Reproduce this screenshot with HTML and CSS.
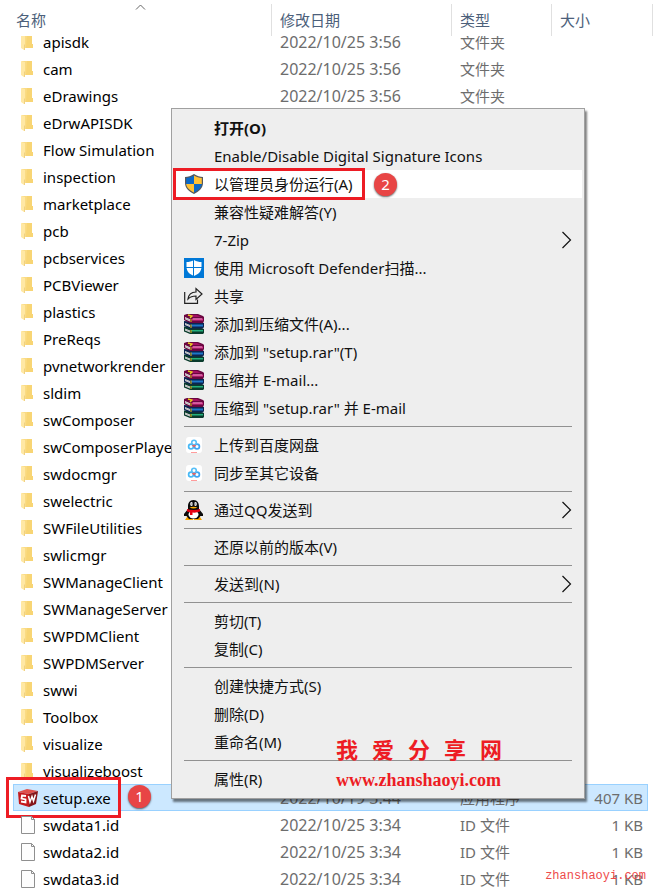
FILE: index.html
```html
<!DOCTYPE html>
<html lang="zh-CN">
<head>
    <meta charset="UTF-8">
    <title>setup.exe</title>

    <link rel="stylesheet" href="styles.css">

</head>
<body>
    <!-- Ícones -->
    <svg class="sprite" aria-hidden="true">
        <symbol id="folder" viewBox="0 0 14 18">
            <path d="M1 1H11V11H12V15H1Z" fill="#fadb84"/>
            <path d="M6 1H11V11H12V15H5Z" fill="#f8d574"/>
            <path d="M0 1L4 2V17H3L0 15Z" fill="#ffe8a4"/>
            <path d="M4 2V17H3V12L4 11Z" fill="#efd183"/>
        </symbol>
        <symbol id="file" viewBox="0 0 14 18">
            <path d="M.5 .5H10.500L13.500 3.500V17.500H.5Z" fill="#fdfdfd" stroke="#8f8f8f"/>
            <path d="M10.500 .5V3.500H13.500" fill="none" stroke="#8f8f8f"/>
        </symbol>
        <symbol id="solidworks" viewBox="0 0 20 18">
            <path d="M0 3L9 0L20 2L11 5Z" fill="#e0504c"/>
            <path d="M0 3L11 5V18L1 15Z" fill="#c4191d"/>
            <path d="M11 5L20 2L18 15L11 18Z" fill="#85161a"/>
            <path d="M8 7L4 6.500L3.500 9.500L7.500 10.500V13.500L3 12.500" fill="none" stroke="#fff" stroke-width="1.800"/>
            <path d="M10.500 7L12 13L14 7.500L15.500 12L17.500 5.500" fill="none" stroke="#fff" stroke-width="1.500"/>
        </symbol>
        <symbol id="uac" viewBox="0 0 20 20">
            <path d="M10 0C7 2 4 3 1 3V9C1 14 5 17.500 10 20C15 17.500 19 14 19 9V3C16 3 13 2 10 0Z" fill="#55585c"/>
            <path d="M10 1.500C7.500 3 5 4 2.200 4V10H10Z" fill="#0b69c7"/>
            <path d="M10 1.500C12.500 3 15 4 17.800 4V10H10Z" fill="#ffc235"/>
            <path d="M10 18.500C5.500 16.300 2.500 13.500 2.200 10H10Z" fill="#ffc235"/>
            <path d="M10 18.500C14.500 16.300 17.500 13.500 17.800 10H10Z" fill="#0b69c7"/>
        </symbol>
        <symbol id="defender" viewBox="0 0 20 20">
            <path d="M0 0H20V20H0Z" fill="#0078d7"/>
            <path d="M10 2C7.500 3.500 5 4 2.500 4V9C2.500 13.500 6 16.500 10 18C14 16.500 17.500 13.500 17.500 9V4C15 4 12.500 3.500 10 2Z" fill="#fff"/>
            <path d="M9.500 2V18M2 9.500H18" stroke="#0078d7" fill="none"/>
        </symbol>
        <symbol id="share" viewBox="0 0 20 20">
            <path d="M.7 6V17.300H13.500V13.500" fill="none" stroke="#222" stroke-width="1.200"/>
            <path d="M4 13C4.500 8.500 7.500 6.200 12 6V2.500L18 8L12 13.500V10C8 10 6 11 4 13Z" fill="none" stroke="#222" stroke-width="1.200"/>
        </symbol>
        <symbol id="winrar" viewBox="0 0 20 20">
            <path d="M0 12.500L15 13L20 15V19L19 20H6L0 17.500Z" fill="#0a3b2c"/>
            <path d="M7 16H19V17.500H7Z" fill="#22b07c"/>
            <path d="M0 7L15 8L20 9V13L19 14.500H6L0 12Z" fill="#0c2450"/>
            <path d="M7 10.500H19V12.500H7Z" fill="#1d77c8"/>
            <path d="M0 1L3 0H14L19 2L20 3V7L19 9H6L0 6Z" fill="#6b0640"/>
            <path d="M3 1H13L17 3H8Z" fill="#a30d62"/>
            <path d="M8 4.500H19V6.500H8Z" fill="#d3358c"/>
            <path d="M9 4.500H18V5.300H9Z" fill="#f0a0cc"/>
            <path d="M1 3L6 5.300V7.500L1 5.300ZM1 9L6 11V13L1 11ZM1 14.500L6 16.500V18.500L1 16.500Z" fill="#e4e4e4"/>
            <path d="M1 4.200L6 6.400M1 10L6 12M1 15.500L6 17.500" fill="none" stroke="#999" stroke-width=".6"/>
            <path d="M4 1L8 2L6 4" fill="none" stroke="#e8cf1c" stroke-width="1.300"/>
            <path d="M7 5V8M7 10.500V14M7 16V19" stroke="#c4a51c" stroke-width="1.200"/>
        </symbol>
        <symbol id="baidu" viewBox="0 0 20 20">
            <rect x="2" y="2" width="16" height="16" rx="3" fill="#fff"/>
            <circle cx="7" cy="11.500" r="2.400" fill="none" stroke="#46b8f5" stroke-width="1.700"/>
            <circle cx="13" cy="11.500" r="2.400" fill="none" stroke="#3fa4f2" stroke-width="1.700"/>
            <circle cx="10" cy="7.500" r="2.300" fill="none" stroke="#58bff7" stroke-width="1.600"/>
            <path d="M8.500 10L10 11.500L11.500 10" fill="none" stroke="#f0605f" stroke-width="1.500"/>
            <path d="M7 17.500H13" stroke="#ff9c9c"/>
        </symbol>
        <symbol id="qq" viewBox="0 0 20 20">
            <path d="M3 17H9V20H1ZM10 17H16L18 20H10Z" fill="#f5a400"/>
            <path d="M9.500 0C5.500 0 4 3 4 6.500V9L0 14V16H2.500L5 19H14L16.500 16H19V14L15 9V6.500C15 3 13.500 0 9.500 0Z" fill="#0b0b0b"/>
            <ellipse cx="9.500" cy="14.500" rx="5" ry="4" fill="#fff"/>
            <ellipse cx="7.500" cy="4" rx="1.300" ry="2" fill="#fff"/>
            <ellipse cx="11.500" cy="4" rx="1.300" ry="2" fill="#fff"/>
            <path d="M7.500 4H8.500M10.500 4H11.500" stroke="#000"/>
            <path d="M5.500 7.500Q9.500 6 13.500 7.500Q9.500 9.500 5.500 7.500Z" fill="#ffae00"/>
            <path d="M3 9Q9.500 11 16 9V11.500Q12 13 8.500 12.500V15H6V12.300L3 11.500Z" fill="#e60012"/>
        </symbol>
        <symbol id="arrow" viewBox="0 0 10 18">
            <path d="M.5 1L8.500 9L.5 17" fill="none" stroke="#111" stroke-width="1.200"/>
        </symbol>
    </svg>

    <main class="explorer">
        <table class="files">
            <thead>
                <tr>
                    <th class="col-name"><span>名称<svg class="sort" viewBox="0 0 10 6"><path d="M.5 5.500L5 1L9.500 5.500" fill="none" stroke="#666"/></svg></span></th>
                    <th class="col-date"><span>修改日期</span></th>
                    <th class="col-type"><span>类型</span></th>
                    <th class="col-size"><span>大小</span></th>
                </tr>
            </thead>
            <tbody id="fileList"></tbody>
        </table>
        <div class="site-mark">zhanshaoyi.com</div>
    </main>

    <ul class="menu">
        <li><button type="button" class="default">打开(O)</button></li>
        <li><button type="button">Enable/Disable Digital Signature Icons</button></li>
        <li class="active">
            <button type="button"><svg class="icon"><use href="#uac"/></svg>以管理员身份运行(A)</button>
            <span class="mark mark-menu"></span>
            <span class="badge badge-menu">2</span>
        </li>
        <li><button type="button">兼容性疑难解答(Y)</button></li>
        <li><button type="button">7-Zip<svg class="arrow"><use href="#arrow"/></svg></button></li>
        <li><button type="button"><svg class="icon"><use href="#defender"/></svg>使用 Microsoft Defender扫描...</button></li>
        <li><button type="button"><svg class="icon"><use href="#share"/></svg>共享</button></li>
        <li><button type="button"><svg class="icon"><use href="#winrar"/></svg>添加到压缩文件(A)...</button></li>
        <li><button type="button"><svg class="icon"><use href="#winrar"/></svg>添加到 "setup.rar"(T)</button></li>
        <li><button type="button"><svg class="icon"><use href="#winrar"/></svg>压缩并 E-mail...</button></li>
        <li><button type="button"><svg class="icon"><use href="#winrar"/></svg>压缩到 "setup.rar" 并 E-mail</button></li>
        <li class="separator"></li>
        <li><button type="button"><svg class="icon"><use href="#baidu"/></svg>上传到百度网盘</button></li>
        <li><button type="button"><svg class="icon"><use href="#baidu"/></svg>同步至其它设备</button></li>
        <li class="separator"></li>
        <li><button type="button"><svg class="icon"><use href="#qq"/></svg>通过QQ发送到<svg class="arrow"><use href="#arrow"/></svg></button></li>
        <li class="separator"></li>
        <li><button type="button">还原以前的版本(V)</button></li>
        <li class="separator"></li>
        <li><button type="button">发送到(N)<svg class="arrow"><use href="#arrow"/></svg></button></li>
        <li class="separator"></li>
        <li><button type="button">剪切(T)</button></li>
        <li><button type="button">复制(C)</button></li>
        <li class="separator"></li>
        <li><button type="button">创建快捷方式(S)</button></li>
        <li><button type="button">删除(D)</button></li>
        <li><button type="button">重命名(M)</button></li>
        <li class="separator"></li>
        <li><button type="button">属性(R)</button></li>
        <li class="watermark">
            <div class="watermark-name"><span>我</span><span>爱</span><span>分</span><span>享</span><span>网</span></div>
            <div class="watermark-url">www.zhanshaoyi.com</div>
        </li>
    </ul>

    <script>
        const arquivos = [
            { nome: "apisdk", data: "2022/10/25 3:56", tipo: "文件夹" },
            { nome: "cam", data: "2022/10/25 3:56", tipo: "文件夹" },
            { nome: "eDrawings", data: "2022/10/25 3:56", tipo: "文件夹" },
            { nome: "eDrwAPISDK" },
            { nome: "Flow Simulation" },
            { nome: "inspection" },
            { nome: "marketplace" },
            { nome: "pcb" },
            { nome: "pcbservices" },
            { nome: "PCBViewer" },
            { nome: "plastics" },
            { nome: "PreReqs" },
            { nome: "pvnetworkrender" },
            { nome: "sldim" },
            { nome: "swComposer" },
            { nome: "swComposerPlayer" },
            { nome: "swdocmgr" },
            { nome: "swelectric" },
            { nome: "SWFileUtilities" },
            { nome: "swlicmgr" },
            { nome: "SWManageClient" },
            { nome: "SWManageServer" },
            { nome: "SWPDMClient" },
            { nome: "SWPDMServer" },
            { nome: "swwi" },
            { nome: "Toolbox" },
            { nome: "visualize" },
            { nome: "visualizeboost" },
            { nome: "setup.exe", icone: "solidworks", data: "2022/10/19 3:44", tipo: "应用程序", tamanho: "407 KB", selecionado: true },
            { nome: "swdata1.id", icone: "file", data: "2022/10/25 3:34", tipo: "ID 文件", tamanho: "1 KB" },
            { nome: "swdata2.id", icone: "file", data: "2022/10/25 3:34", tipo: "ID 文件", tamanho: "1 KB" },
            { nome: "swdata3.id", icone: "file", data: "2022/10/25 3:34", tipo: "ID 文件", tamanho: "1 KB" }
        ];

        const lista = document.getElementById("fileList");

        arquivos.forEach(arquivo => {
            let linha = lista.insertRow();
            let icone = arquivo.icone || "folder";
            let marcas = "";
            if (arquivo.selecionado) {
                linha.className = "selected";
                marcas = '<span class="mark mark-file"></span><span class="badge badge-file">1</span>';
            }
            linha.innerHTML = `
                <td><div class="name"><svg class="${icone}"><use href="#${icone}"/></svg>${arquivo.nome}${marcas}</div></td>
                <td class="date">${arquivo.data || ""}</td>
                <td>${arquivo.tipo || ""}</td>
                <td class="size">${arquivo.tamanho || ""}</td>
            `;
        });
    </script>
</body>
</html>
```
FILE: styles.css
```css
body {
    margin: 0;
    position: relative;
    background: #fff;
    font-family: "Noto Sans", "Noto Sans CJK SC", sans-serif;
    font-size: 15px;
    color: #000;
}
.sprite {
    display: none;
}
.explorer {
    position: relative;
    padding: 0 18px 0 13px;
}

/* Lista de arquivos */
.files {
    width: 100%;
    table-layout: fixed;
    border-spacing: 0;
    line-height: 20px;
    white-space: nowrap;
}
.files th {
    height: 28px;
    padding: 0;
    text-align: left;
    font-weight: normal;
    color: #4c607a;
}
.files th span {
    display: block;
    box-sizing: border-box;
    position: relative;
    z-index: 1;
    height: 36px;
    margin-bottom: -8px;
    padding: 10px 0 0 8px;
    background: #fff;
}
.files .col-name span {
    padding-left: 3px;
}
.files th span::after {
    content: "";
    position: absolute;
    top: 4px;
    right: 0;
    width: 1px;
    height: 32px;
    background: #e0e0e0;
}
.files .col-size span {
    margin-right: -5px;
}
.col-date {
    width: 180px;
}
.col-type {
    width: 100px;
}
.col-size {
    width: 96px;
}
.sort {
    position: absolute;
    top: 4px;
    left: 122px;
    width: 11px;
    height: 6px;
}
.files td {
    height: 27px;
    padding: 0 0 0 8px;
    color: #6d6d6d;
}
.files td.date {
    font-size: 16px;
}
.files td.size {
    padding: 0 5px 0 0;
    text-align: right;
}
.name {
    display: flex;
    align-items: center;
    position: relative;
    color: #000;
}
.name svg {
    width: 14px;
    height: 18px;
    margin-right: 8px;
}
.name .solidworks {
    width: 20px;
    margin: 0 5px 0 -3px;
}
.selected {
    background: #cce8ff;
    outline: 1px solid #99d1ff;
    outline-offset: -1px;
}

/* Menu de contexto */
.menu {
    box-sizing: border-box;
    position: absolute;
    z-index: 2;
    top: 108px;
    left: 171px;
    width: 414px;
    margin: 0;
    padding: 5px 2px;
    list-style: none;
    background: #eee;
    border: 1px solid #a0a0a0;
    box-shadow: 2px 3px 2px rgba(0, 0, 0, 0.5);
}
.menu button {
    display: flex;
    align-items: center;
    position: relative;
    width: 100%;
    height: 28px;
    padding: 0 10px 0 40px;
    background: none;
    border: none;
    font: inherit;
    line-height: 20px;
    color: #111;
}
.menu .default {
    font-weight: bold;
}
.menu .active {
    position: relative;
    background: #fff;
}
.menu .separator {
    height: 1px;
    margin: 4px 10px;
    background: #919191;
}
.icon {
    width: 20px;
    height: 20px;
    margin: 0 10px 0 -30px;
}
.arrow {
    width: 10px;
    height: 18px;
    margin-left: auto;
}

/* Marcas vermelhas */
.mark {
    box-sizing: border-box;
    position: absolute;
    border: 3px solid #ed1c24;
}
.mark-menu {
    top: -2px;
    left: -1px;
    width: 192px;
    height: 32px;
}
.mark-file {
    top: -11px;
    left: -15px;
    width: 115px;
    height: 41px;
}
.badge {
    position: absolute;
    width: 23px;
    height: 23px;
    background: #e84545;
    border-radius: 50%;
    box-shadow: 0 1px 2px rgba(0, 0, 0, 0.6);
    line-height: 23px;
    text-align: center;
    color: #fff;
}
.badge-menu {
    top: 3px;
    left: 200px;
}
.badge-file {
    top: -3px;
    left: 107px;
}
.watermark {
    position: absolute;
    right: 82px;
    bottom: 6px;
    font-weight: bold;
    color: #ed1c24;
}
.watermark-name {
    display: flex;
    gap: 14px;
    margin-bottom: 3px;
    font-size: 22px;
    line-height: 32px;
}
.watermark-url {
    font-family: "Liberation Serif", serif;
    font-size: 18px;
    line-height: 24px;
}
.site-mark {
    position: absolute;
    right: 20px;
    bottom: 8px;
    font-family: "Liberation Mono", monospace;
    font-size: 12px;
    line-height: 16px;
    color: #ee4a4a;
}
```
